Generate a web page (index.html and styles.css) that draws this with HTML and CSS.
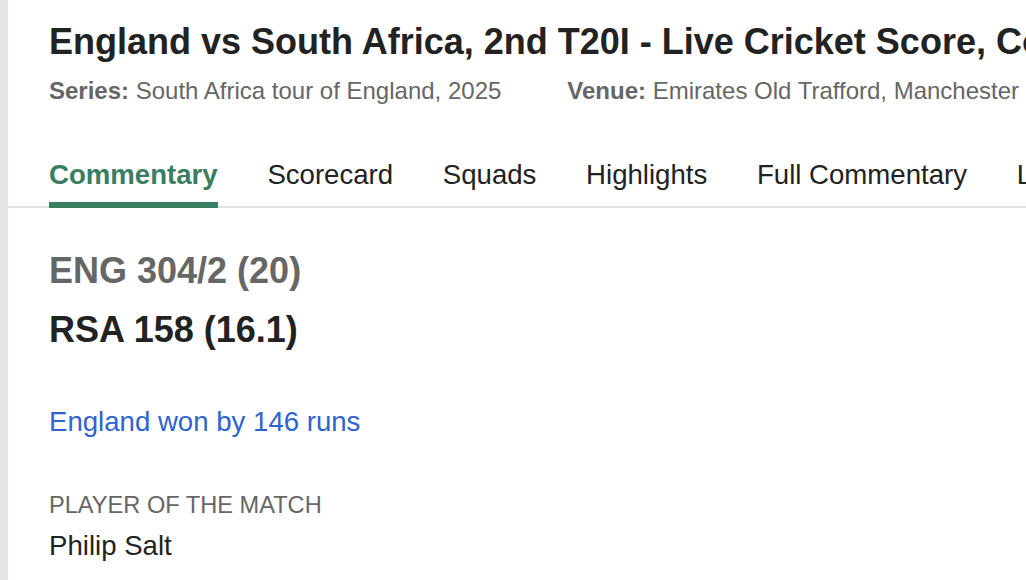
FILE: index.html
```html
<!DOCTYPE html>
<html lang="en">
<head>
<meta charset="utf-8">
<title>England vs South Africa, 2nd T20I</title>
<link rel="stylesheet" href="styles.css">
</head>
<body>
<div class="page">
  <header class="match-header">
    <h1 class="match-title">England vs South Africa, 2nd T20I - Live Cricket Score, Commentary</h1>
    <div class="match-meta">
      <span class="meta-item"><b>Series:</b> South Africa tour of England, 2025</span>
      <span class="meta-item"><b>Venue:</b> Emirates Old Trafford, Manchester</span>
    </div>
  </header>
  <nav class="tabs">
    <a class="tab active">Commentary</a>
    <a class="tab">Scorecard</a>
    <a class="tab">Squads</a>
    <a class="tab">Highlights</a>
    <a class="tab">Full Commentary</a>
    <a class="tab">Live Stats</a>
  </nav>
  <main class="summary">
    <div class="score score-first">ENG 304/2 (20)</div>
    <div class="score score-second">RSA 158 (16.1)</div>
    <div class="result">England won by 146 runs</div>
    <div class="pom-label">PLAYER OF THE MATCH</div>
    <div class="pom-name">Philip Salt</div>
  </main>
</div>
</body>
</html>
```

FILE: styles.css
```css
html, body {
  margin: 0;
  padding: 0;
  background: #ffffff;
}
body {
  font-family: "Liberation Sans", Arial, Helvetica, sans-serif;
  color: #222222;
  overflow: hidden;
}
.page {
  border-left: 8px solid #e4e6e3;
  min-height: 580px;
  box-sizing: border-box;
  overflow: hidden;
}
.match-header {
  padding: 21px 0 0 41px;
}
.match-title {
  margin: 0;
  font-size: 36px;
  line-height: 42px;
  font-weight: bold;
  color: #222222;
  white-space: nowrap;
}
.match-meta {
  display: flex;
  gap: 66px;
  margin-top: 14px;
  font-size: 24px;
  line-height: 28px;
  color: #666666;
  white-space: nowrap;
}
.meta-item b {
  font-weight: bold;
}
.tabs {
  display: flex;
  gap: 49.7px;
  margin-top: 54px;
  padding-left: 41px;
  border-bottom: 2px solid #e4e4e4;
  white-space: nowrap;
}
.tab {
  display: block;
  font-size: 27.6px;
  line-height: 32px;
  color: #222222;
  padding-bottom: 11px;
  border-bottom: 6px solid transparent;
  margin-bottom: -2px;
}
.tab.active {
  color: #3a7d62;
  font-weight: bold;
  border-bottom-color: #3a7d62;
}
.summary {
  padding: 42px 0 0 41px;
}
.score {
  font-size: 36px;
  line-height: 42px;
  font-weight: bold;
}
.score-first {
  color: #666666;
}
.score-second {
  color: #222222;
  margin-top: 17px;
}
.result {
  margin-top: 55px;
  font-size: 27.6px;
  line-height: 32px;
  color: #2f63cf;
}
.pom-label {
  margin-top: 53px;
  font-size: 23.6px;
  line-height: 28px;
  color: #666666;
}
.pom-name {
  margin-top: 11px;
  font-size: 27.6px;
  line-height: 32px;
  color: #222222;
}
```
